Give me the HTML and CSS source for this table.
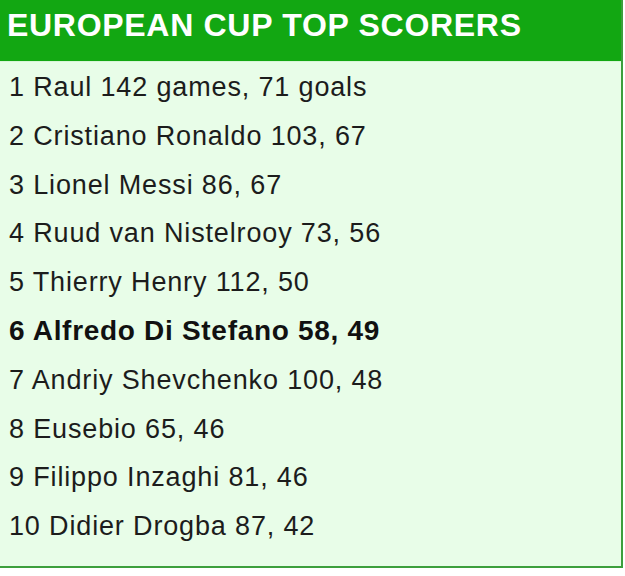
FILE: index.html
```
<!DOCTYPE html>
<html>
<head>
<meta charset="utf-8">
<link rel="stylesheet" href="styles.css">
</head>
<body>
<div class="card">
  <h2 class="card-title">EUROPEAN CUP TOP SCORERS</h2>
  <ul class="scorers">
    <li>1 Raul 142 games, 71 goals</li>
    <li>2 Cristiano Ronaldo 103, 67</li>
    <li>3 Lionel Messi 86, 67</li>
    <li>4 Ruud van Nistelrooy 73, 56</li>
    <li>5 Thierry Henry 112, 50</li>
    <li class="highlight">6 Alfredo Di Stefano 58, 49</li>
    <li>7 Andriy Shevchenko 100, 48</li>
    <li>8 Eusebio 65, 46</li>
    <li>9 Filippo Inzaghi 81, 46</li>
    <li>10 Didier Drogba 87, 42</li>
  </ul>
</div>
</body>
</html>
```
FILE: styles.css
```
html, body {
  margin: 0;
  padding: 0;
  background: #ffffff;
}
.card {
  width: 621px;
  background: #e8fde8;
  border-right: 2px solid #3c9f3c;
  border-bottom: 2px solid #3c9f3c;
  font-family: "Liberation Sans", Arial, sans-serif;
}
.card-title {
  margin: 0;
  height: 40px;
  padding: 5px 0 16px 7px;
  background: #12a712;
  color: #ffffff;
  font-size: 32px;
  font-weight: bold;
  line-height: 40px;
  letter-spacing: 0.7px;
  border-bottom: 1px solid #d8f5d8;
}
.scorers {
  list-style: none;
  margin: 0;
  padding: 1px 0 15px 9px;
}
.scorers li {
  font-size: 27px;
  line-height: 48.8px;
  letter-spacing: 0.85px;
  color: #1c1c1c;
}
.scorers li.highlight {
  font-size: 28px;
  font-weight: bold;
  letter-spacing: 0.7px;
  color: #111111;
}
```
